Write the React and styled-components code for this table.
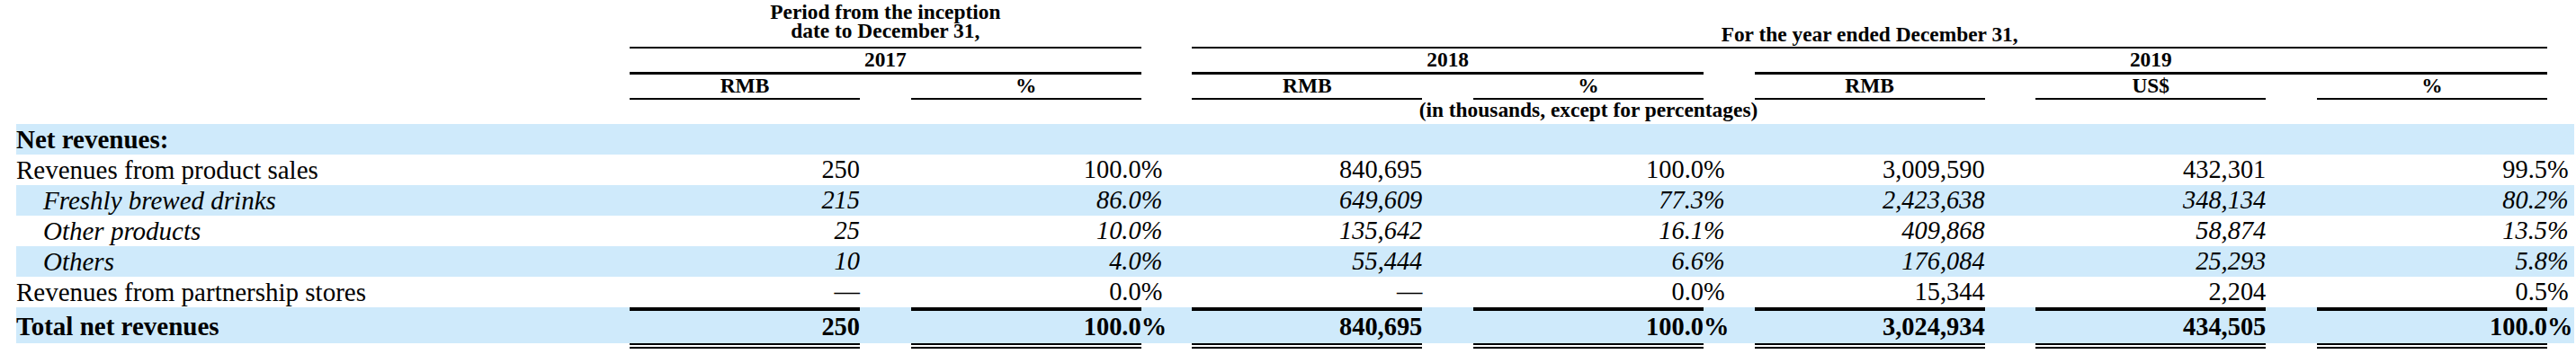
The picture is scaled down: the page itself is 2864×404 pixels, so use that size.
import React from 'react';
import styled, { createGlobalStyle, css } from 'styled-components';

const GlobalStyle = createGlobalStyle`
  html, body {
    margin: 0;
    padding: 0;
    background: #ffffff;
  }
  body {
    font-family: "Liberation Serif", "Times New Roman", serif;
    color: #000000;
  }
`;

const SHADE = '#cfeafb';
const COLUMNS = '682px repeat(6, 256px 56.667px) 256px 30px';

const Page = styled.div`
  padding: 0 0 0 18px;
  width: 2844px;
`;

const Header = styled.div`
  display: grid;
  grid-template-columns: ${COLUMNS};
  grid-template-rows: 54px 29px 28px 27px;
`;

const HeadCell = styled.div`
  grid-column: ${(p) => p.$col};
  grid-row: ${(p) => p.$row};
  box-sizing: border-box;
  display: flex;
  flex-direction: column;
  justify-content: ${(p) => (p.$top ? 'flex-start' : 'flex-end')};
  align-items: center;
  text-align: center;
  font-size: 23.4px;
  font-weight: 700;
  line-height: 21px;
  white-space: nowrap;
  padding-top: ${(p) => p.$pt || 0}px;
  padding-bottom: ${(p) => p.$pb || 0}px;
  border-bottom: ${(p) => (p.$rule ? `${p.$rule}px solid #000` : 'none')};
`;

const Row = styled.div`
  display: grid;
  grid-template-columns: ${COLUMNS};
  height: ${(p) => (p.$total ? 40 : 34)}px;
  background: ${(p) => (p.$shade ? SHADE : 'transparent')};
  font-weight: ${(p) => (p.$bold ? 700 : 400)};
  font-style: ${(p) => (p.$italic ? 'italic' : 'normal')};
`;

const Label = styled.div`
  font-size: 29px;
  line-height: 34px;
  white-space: nowrap;
  padding-left: ${(p) => (p.$indent ? 30 : 0)}px;
  ${(p) =>
    p.$total &&
    css`
      padding-top: 4px;
    `}
`;

const Value = styled.div`
  box-sizing: border-box;
  font-size: 28.4px;
  line-height: 34px;
  text-align: right;
  white-space: nowrap;
  ${(p) =>
    p.$total &&
    css`
      border-top: 4px solid #000;
      padding-top: 1px;
    `}
`;

const Sign = styled.div`
  font-size: 28.4px;
  line-height: 34px;
  text-align: left;
  white-space: nowrap;
  ${(p) =>
    p.$total &&
    css`
      padding-top: 5px;
    `}
`;

const Raised = styled.span`
  vertical-align: 3px;
`;

const RuleRow = styled.div`
  display: grid;
  grid-template-columns: ${COLUMNS};
  height: 6px;
`;

const DoubleRule = styled.div`
  grid-column: ${(p) => p.$col};
  box-sizing: border-box;
  border-top: 6px double #000;
`;

const PCT = [false, true, false, true, false, false, true];
const VALUE_COLS = [2, 4, 6, 8, 10, 12, 14];
const UNITS = ['RMB', '%', 'RMB', '%', 'RMB', 'US$', '%'];

const rows = [
  {
    label: 'Revenues from product sales',
    values: ['250', '100.0', '840,695', '100.0', '3,009,590', '432,301', '99.5'],
  },
  {
    label: 'Freshly brewed drinks',
    italic: true,
    values: ['215', '86.0', '649,609', '77.3', '2,423,638', '348,134', '80.2'],
  },
  {
    label: 'Other products',
    italic: true,
    values: ['25', '10.0', '135,642', '16.1', '409,868', '58,874', '13.5'],
  },
  {
    label: 'Others',
    italic: true,
    values: ['10', '4.0', '55,444', '6.6', '176,084', '25,293', '5.8'],
  },
  {
    label: 'Revenues from partnership stores',
    values: ['\u2014', '0.0', '\u2014', '0.0', '15,344', '2,204', '0.5'],
  },
];

const totals = ['250', '100.0', '840,695', '100.0', '3,024,934', '434,505', '100.0'];

const Cells = ({ values, total }) =>
  values.map((v, i) => (
    <React.Fragment key={i}>
      <Value $total={total}>{v}</Value>
      <Sign $total={total}>
        {PCT[i] ? total ? <Raised>%</Raised> : '%' : null}
      </Sign>
    </React.Fragment>
  ));

const App = () => {
  return (
    <Page>
      <GlobalStyle />
      <Header>
        <HeadCell $col="2 / 5" $row="1" $rule={2} $pb={7}>
          <span>Period from the inception</span>
          <span>date to December 31,</span>
        </HeadCell>
        <HeadCell $col="6 / 15" $row="1" $rule={2} $pb={3}>
          For the year ended December 31,
        </HeadCell>

        <HeadCell $col="2 / 5" $row="2" $rule={3} $pb={3}>2017</HeadCell>
        <HeadCell $col="6 / 9" $row="2" $rule={3} $pb={3}>2018</HeadCell>
        <HeadCell $col="10 / 15" $row="2" $rule={3} $pb={3}>2019</HeadCell>

        {UNITS.map((u, i) => (
          <HeadCell key={i} $col={`${VALUE_COLS[i]}`} $row="3" $rule={2} $pb={3}>
            {u}
          </HeadCell>
        ))}

        <HeadCell $col="2 / 15" $row="4" $top $pt={1}>
          (in thousands, except for percentages)
        </HeadCell>
      </Header>

      <Row $shade $bold>
        <Label>Net revenues:</Label>
      </Row>

      {rows.map((r, i) => (
        <Row key={r.label} $shade={i % 2 === 1} $italic={r.italic}>
          <Label $indent={r.italic}>{r.label}</Label>
          <Cells values={r.values} />
        </Row>
      ))}

      <Row $shade $bold $total>
        <Label $total>Total net revenues</Label>
        <Cells values={totals} total />
      </Row>

      <RuleRow>
        {VALUE_COLS.map((c) => (
          <DoubleRule key={c} $col={`${c}`} />
        ))}
      </RuleRow>
    </Page>
  );
};

export default App;
